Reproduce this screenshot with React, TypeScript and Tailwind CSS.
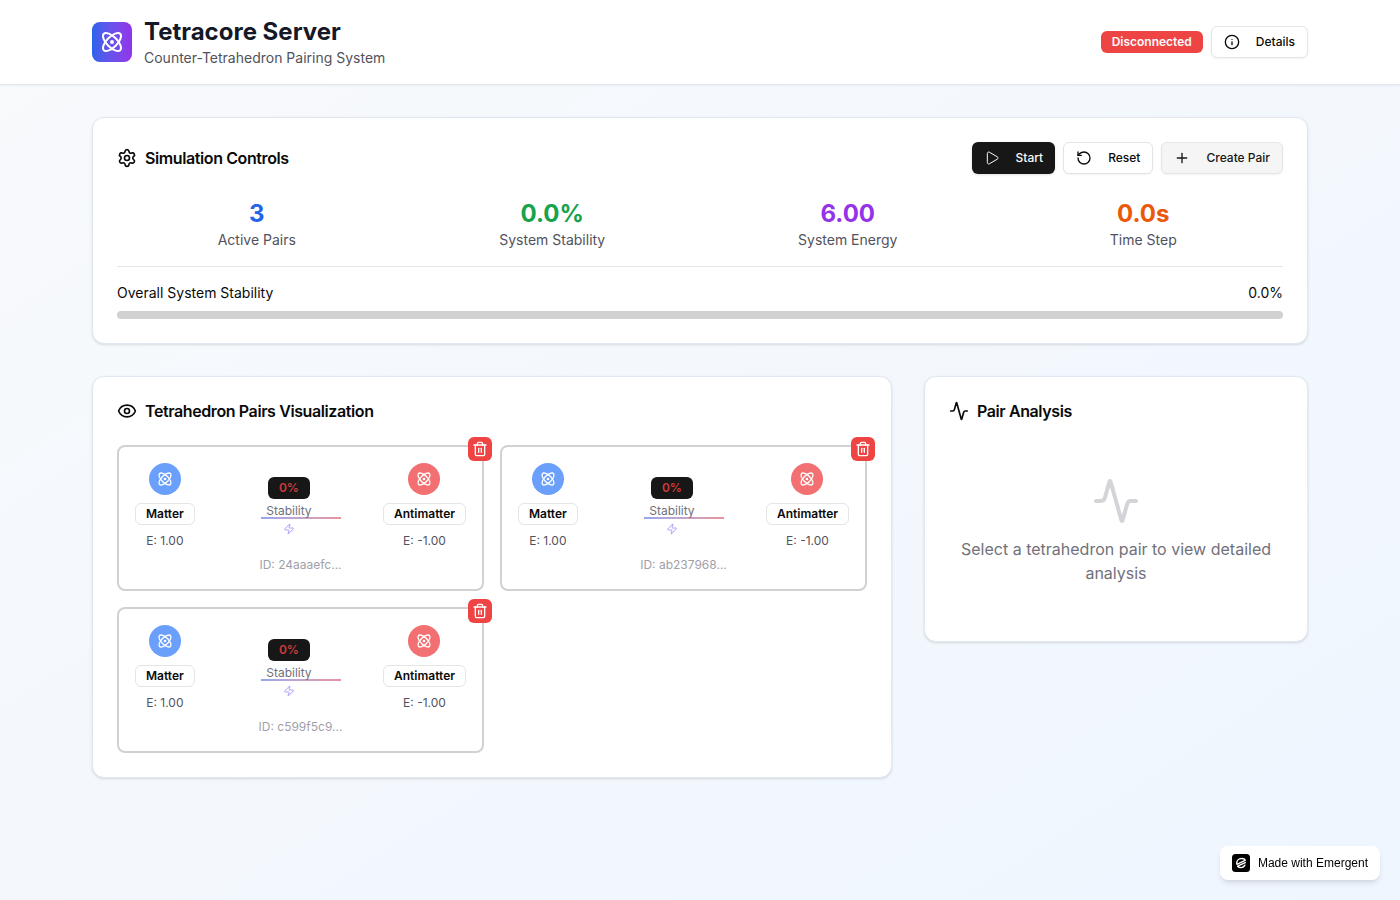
import { useState } from "react";
import type { ReactNode } from "react";
import { Activity, Atom, Eye, Info, Play, Plus, RotateCcw, Settings, Trash2, Zap } from "lucide-react";

const buttonBase = "inline-flex h-8 items-center justify-center gap-4 rounded-md px-3 text-xs font-medium";
const outlineButton = `${buttonBase} border border-neutral-200 bg-white text-neutral-950 shadow-xs`;
const badgeBase = "inline-flex items-center rounded-md border px-2.5 py-0.5 text-xs font-semibold";

const stats = [
  { label: "Active Pairs", value: "3", color: "text-[#2563eb]" },
  { label: "System Stability", value: "0.0%", color: "text-[#16a34a]" },
  { label: "System Energy", value: "6.00", color: "text-[#9333ea]" },
  { label: "Time Step", value: "0.0s", color: "text-[#ea580c]" },
];

const initialPairs = ["24aaaefc", "ab237968", "c599f5c9"];

function Card({ className = "", children }: { className?: string; children: ReactNode }) {
  return (
    <section className={`rounded-xl border border-slate-200 bg-white p-6 shadow-sm ${className}`}>{children}</section>
  );
}

function CardTitle({ icon, children }: { icon: ReactNode; children: ReactNode }) {
  return (
    <h2 className="flex items-center gap-2 text-base leading-5 font-semibold tracking-tight">
      {icon}
      {children}
    </h2>
  );
}

function Particle({ label, energy, color }: { label: string; energy: string; color: string }) {
  return (
    <div className="flex flex-col items-center gap-2">
      <div className={`flex size-8 items-center justify-center rounded-full ${color}`}>
        <Atom className="size-4 text-white" />
      </div>
      <span className={`${badgeBase} border-neutral-200`}>{label}</span>
      <span className="text-xs text-zinc-600">E: {energy}</span>
    </div>
  );
}

function PairTile({ id, onDelete }: { id: string; onDelete: () => void }) {
  return (
    <div className="relative rounded-lg border-2 border-[#d1d1d4] bg-white p-4">
      <div className="flex items-center justify-between">
        <Particle label="Matter" energy="1.00" color="bg-[#6a9ffb]" />
        <div className="flex flex-col items-center gap-1">
          <span className={`${badgeBase} border-transparent bg-neutral-900 text-[#d13a3a]`}>0%</span>
          <span className="text-xs text-zinc-500">Stability</span>
          <Zap className="size-3 text-[#a9a2fa]" />
        </div>
        <Particle label="Antimatter" energy="-1.00" color="bg-[#f37072]" />
      </div>
      <p className="mt-2 text-center text-xs text-zinc-400">ID: {id}...</p>
      <div className="pointer-events-none absolute inset-0 flex items-center justify-center">
        <div className="h-0.5 w-20 bg-linear-to-r from-[#4f6be8] to-[#d9485a] opacity-60" />
      </div>
      <button
        type="button"
        aria-label={`Delete pair ${id}`}
        onClick={onDelete}
        className="absolute -top-2.5 -right-2.5 flex size-6 items-center justify-center rounded-md bg-[#ef4444] text-white"
      >
        <Trash2 className="size-4" />
      </button>
    </div>
  );
}

export default function App() {
  const [pairs, setPairs] = useState(initialPairs);

  return (
    <div className="min-h-screen bg-linear-to-br from-slate-50 to-blue-50 font-[Inter,sans-serif] text-neutral-950">
      <header className="border-b border-slate-200 bg-white shadow-xs">
        <div className="mx-auto flex max-w-7xl items-center justify-between px-8 py-4">
          <div className="flex items-center gap-3">
            <div className="flex size-10 items-center justify-center rounded-lg bg-linear-to-r from-[#2563eb] to-[#9333ea]">
              <Atom className="size-6 text-white" />
            </div>
            <div>
              <h1 className="text-2xl font-bold text-[#151827]">Tetracore Server</h1>
              <p className="text-sm text-zinc-600">Counter-Tetrahedron Pairing System</p>
            </div>
          </div>
          <div className="flex items-center gap-2">
            <span className={`${badgeBase} border-transparent bg-[#ef4444] text-neutral-50`}>Disconnected</span>
            <button type="button" className={outlineButton}>
              <Info className="size-4" />
              Details
            </button>
          </div>
        </div>
      </header>

      <main className="mx-auto flex max-w-7xl flex-col gap-8 px-8 py-8">
        <Card>
          <div className="flex items-center justify-between">
            <CardTitle icon={<Settings className="size-5" />}>Simulation Controls</CardTitle>
            <div className="flex gap-2">
              <button type="button" className={`${buttonBase} bg-neutral-900 text-neutral-50 shadow-sm`}>
                <Play className="size-4" strokeWidth={1.5} />
                Start
              </button>
              <button type="button" className={outlineButton}>
                <RotateCcw className="size-4" />
                Reset
              </button>
              <button
                type="button"
                className={`${buttonBase} border border-neutral-200 bg-neutral-100 text-neutral-900 shadow-xs`}
              >
                <Plus className="size-4" />
                Create Pair
              </button>
            </div>
          </div>
          <dl className="mt-6 grid grid-cols-4 gap-4">
            {stats.map((stat) => (
              <div key={stat.label} className="flex flex-col-reverse text-center">
                <dt className="text-sm text-zinc-600">{stat.label}</dt>
                <dd className={`text-2xl font-bold ${stat.color}`}>{stat.value}</dd>
              </div>
            ))}
          </dl>
          <div className="mt-4 border-t border-neutral-200 pt-4">
            <div className="flex justify-between text-sm">
              <span id="stability-label">Overall System Stability</span>
              <span>0.0%</span>
            </div>
            <div
              role="progressbar"
              aria-labelledby="stability-label"
              aria-valuenow={0}
              aria-valuemin={0}
              aria-valuemax={100}
              className="mt-2 h-2 rounded-full bg-[#d1d1d1]"
            />
          </div>
        </Card>

        <div className="grid grid-cols-3 items-start gap-8">
          <Card className="col-span-2">
            <CardTitle icon={<Eye className="size-5" />}>Tetrahedron Pairs Visualization</CardTitle>
            <div className="mt-6 grid grid-cols-2 gap-4">
              {pairs.map((id) => (
                <PairTile key={id} id={id} onDelete={() => setPairs(pairs.filter((pair) => pair !== id))} />
              ))}
            </div>
          </Card>
          <Card>
            <CardTitle icon={<Activity className="size-5" />}>Pair Analysis</CardTitle>
            <div className="mt-6 flex flex-col items-center gap-3 py-8 text-center text-zinc-500">
              <Activity className="size-12 text-zinc-300" />
              <p>Select a tetrahedron pair to view detailed analysis</p>
            </div>
          </Card>
        </div>
      </main>

      <a
        href="#emergent"
        className="fixed right-5 bottom-5 flex items-center gap-2 rounded-lg bg-white px-3 py-2 font-['Liberation_Sans',sans-serif] text-xs leading-[18px] text-black shadow-md"
      >
        <svg viewBox="0 0 18 18" className="size-[18px]" aria-hidden="true">
          <rect width="18" height="18" rx="3.5" fill="#000" />
          <g fill="none" stroke="#fff" strokeWidth="1.4" strokeLinecap="round" strokeLinejoin="round">
            <path d="M4.700 9.500C4.700 6.500 6.800 4.500 9.500 4.500c1.900 0 3.300.7 3.700 1.900L4.900 10.300" />
            <path d="M13.300 8.600 5.600 12.200c.8 1 2 1.400 3.300 1.400 1.900 0 3.400-1 4-2.500" />
          </g>
        </svg>
        Made with Emergent
      </a>
    </div>
  );
}
